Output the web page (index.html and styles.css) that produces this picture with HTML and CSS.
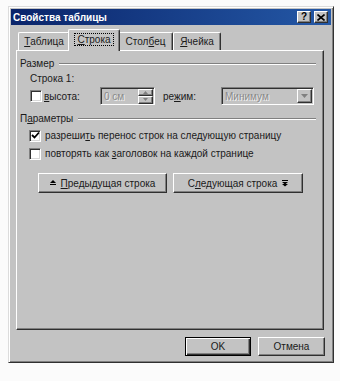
FILE: index.html
```html
<!DOCTYPE html>
<html lang="ru">
<head>
    <meta charset="UTF-8">
    <title>Свойства таблицы</title>
    <link rel="stylesheet" href="styles.css">
</head>
<body>

<div class="window">
    <div class="titlebar">
        <span class="title">Свойства таблицы</span>
        <div class="title-btns">
            <span class="tbtn">?</span>
            <span class="tbtn close">
                <svg width="8" height="7" viewBox="0 0 8 7"><path d="M0.5 0.5 L7.5 6.5 M7.5 0.5 L0.5 6.5" stroke="#000" stroke-width="1.6"/></svg>
            </span>
        </div>
    </div>

    <div class="body">
        <!-- Tabs -->
        <div class="tabs">
            <div class="tab t1"><u>Т</u>аблица</div>
            <div class="tab t2 active"><span class="focus"><u>С</u>трока</span></div>
            <div class="tab t3">Стол<u>б</u>ец</div>
            <div class="tab t4"><u>Я</u>чейка</div>
        </div>

        <div class="panel">
            <!-- Size group -->
            <div class="group-head"><span>Размер</span><div class="etched"></div></div>
            <div class="row-label">Строка 1:</div>
            <div class="size-row">
                <span class="checkbox"></span>
                <span class="lbl-height"><u>в</u>ысота:</span>
                <div class="field spin">
                    <span class="disabled">0 см</span>
                    <div class="spinner">
                        <span class="sbtn"><svg width="5" height="3" viewBox="0 0 5 3"><path d="M2.5 0 L5 3 L0 3 Z" fill="#808080"/></svg></span>
                        <span class="sbtn"><svg width="5" height="3" viewBox="0 0 5 3"><path d="M0 0 L5 0 L2.5 3 Z" fill="#808080"/></svg></span>
                    </div>
                </div>
                <span class="lbl-mode">ре<u>ж</u>им:</span>
                <div class="field combo">
                    <span class="disabled">Минимум</span>
                    <span class="drop"><svg width="7" height="4" viewBox="0 0 7 4"><path d="M0 0 L7 0 L3.5 4 Z" fill="#808080"/></svg></span>
                </div>
            </div>

            <!-- Options group -->
            <div class="group-head params"><span>П<u>а</u>раметры</span><div class="etched"></div></div>
            <div class="check-row first">
                <span class="checkbox">
                    <svg width="9" height="9" viewBox="0 0 9 9"><path d="M1 4 L3.5 6.5 L8 1.5" fill="none" stroke="#000" stroke-width="1.8"/></svg>
                </span>
                <span>разреши<u>т</u>ь перенос строк на следующую страницу</span>
            </div>
            <div class="check-row">
                <span class="checkbox"></span>
                <span>повторять как <u>з</u>аголовок на каждой странице</span>
            </div>

            <div class="nav-row">
                <button class="btn nav">
                    <svg width="6" height="6" viewBox="0 0 6 6"><path d="M3 0 L6 3 L0 3 Z" fill="#000"/><rect x="0" y="4" width="6" height="1" fill="#000"/></svg>
                    <span><u>П</u>редыдущая строка</span>
                </button>
                <button class="btn nav">
                    <span>С<u>л</u>едующая строка</span>
                    <svg width="6" height="7" viewBox="0 0 6 7"><rect x="0" y="0" width="6" height="1" fill="#000"/><path d="M0 2 L6 2 L3 4.5 Z M0 4 L6 4 L3 6.5 Z" fill="#000"/></svg>
                </button>
            </div>
        </div>

        <div class="footer">
            <button class="btn default">OK</button>
            <button class="btn cancel">Отмена</button>
        </div>
    </div>
</div>

</body>
</html>
```

FILE: styles.css
```css
/* Classic dialog look */
body {
    margin: 0;
    background-color: #fbfbfb;
    font-family: "Liberation Sans", Arial, sans-serif;
    font-size: 10px;
    color: #1a1a1a;
}

u {
    text-decoration: underline;
    text-underline-offset: 1px;
}

.window {
    margin: 6px 0 0 8px;
    width: 326px;
    height: 357px;
    box-sizing: border-box;
    padding: 2px;
    background-color: #c3c3c3;
    border: 1px solid;
    border-color: #dcdcdc #303030 #303030 #dcdcdc;
    box-shadow: inset 1px 1px #fff, inset -1px -1px #808080;
}

/* Title bar */
.titlebar {
    height: 16px;
    display: flex;
    align-items: center;
    justify-content: space-between;
    padding: 0 3px 0 2px;
    background: linear-gradient(to right, #0a246a, #2458a6);
}

.title {
    color: #fff;
    font-weight: bold;
    font-size: 10px;
}

.title-btns {
    display: flex;
    gap: 3px;
}

.tbtn {
    width: 12px;
    height: 10px;
    display: flex;
    align-items: center;
    justify-content: center;
    background-color: #c3c3c3;
    font-weight: bold;
    font-size: 10px;
    line-height: 10px;
    color: #000;
    border: 1px solid;
    border-color: #fff #303030 #303030 #fff;
    box-shadow: inset -1px -1px #808080;
    box-sizing: content-box;
}

/* Body */
.body {
    padding: 4px 7px 0 5px;
}

/* Tabs */
.tabs {
    display: flex;
    align-items: flex-end;
    height: 21px;
    padding-left: 2px;
}

.tab {
    height: 18px;
    box-sizing: border-box;
    display: flex;
    align-items: center;
    justify-content: center;
    border: 1px solid;
    border-bottom: none;
    border-color: #fff #303030 #303030 #fff;
    border-radius: 2px 2px 0 0;
    box-shadow: inset -1px 0 #808080;
}

.t1 { width: 52px; }
.t2 { width: 52px; }
.t3 { width: 55px; }
.t4 { width: 48px; }

.tab.active {
    height: 22px;
    margin: 0 -2px -1px;
    position: relative;
    z-index: 1;
    background-color: #c3c3c3;
    padding-bottom: 2px;
}

.focus {
    outline: 1px dotted #000;
    outline-offset: 0;
    padding: 0 2px;
}

/* Tab panel */
.panel {
    width: 308px;
    height: 280px;
    box-sizing: border-box;
    border: 1px solid;
    border-color: #fff #303030 #303030 #fff;
    box-shadow: inset -1px -1px #808080;
    padding: 6px 7px 0 3px;
}

.group-head {
    display: flex;
    align-items: center;
    height: 13px;
}

.group-head.params {
    margin-top: 7px;
}

.etched {
    flex: 1;
    margin-left: 5px;
    border-top: 1px solid #808080;
    border-bottom: 1px solid #fff;
}

.row-label {
    height: 13px;
    line-height: 13px;
    margin-top: 2px;
    padding-left: 10px;
}

.size-row {
    display: flex;
    align-items: center;
    height: 18px;
    margin-top: 2px;
    padding-left: 10px;
}

.checkbox {
    width: 12px;
    height: 12px;
    box-sizing: border-box;
    display: flex;
    align-items: center;
    justify-content: center;
    background-color: #fff;
    border: 1px solid;
    border-color: #808080 #fff #fff #808080;
    box-shadow: inset 1px 1px #303030, inset -1px -1px #d8d8d8;
    flex-shrink: 0;
}

.lbl-height {
    width: 56px;
    margin-left: 2px;
}

.lbl-mode {
    width: 58px;
    margin-left: 8px;
}

.field {
    height: 18px;
    box-sizing: border-box;
    display: flex;
    align-items: center;
    justify-content: space-between;
    border: 1px solid;
    border-color: #808080 #fff #fff #808080;
    box-shadow: inset 1px 1px #303030;
    padding: 1px 1px 1px 3px;
    background-color: #c3c3c3;
}

.spin {
    width: 55px;
}

.combo {
    width: 93px;
}

.disabled {
    color: #8a8a8a;
    text-shadow: 1px 1px #f2f2f2;
}

.spinner {
    display: flex;
    flex-direction: column;
    width: 15px;
    height: 15px;
}

.sbtn, .drop {
    flex: 1;
    display: flex;
    align-items: center;
    justify-content: center;
    border: 1px solid;
    border-color: #fff #303030 #303030 #fff;
    box-shadow: inset -1px -1px #808080;
}

.drop {
    flex: none;
    width: 13px;
    height: 12px;
}

/* Check rows */
.check-row {
    display: flex;
    align-items: center;
    height: 13px;
    margin-top: 5px;
    padding-left: 9px;
}

.check-row.first {
    margin-top: 4px;
}

.check-row .checkbox {
    margin-right: 4px;
}

/* Buttons */
.btn {
    font-family: inherit;
    font-size: 10px;
    color: #1a1a1a;
    height: 20px;
    padding: 0;
    background-color: #c3c3c3;
    border: 1px solid;
    border-color: #fff #303030 #303030 #fff;
    box-shadow: inset -1px -1px #808080;
    display: flex;
    align-items: center;
    justify-content: center;
    gap: 5px;
}

.nav-row {
    display: flex;
    gap: 6px;
    margin-top: 13px;
    padding-left: 18px;
}

.nav:first-child { width: 129px; }
.nav:last-child { width: 130px; }

.footer {
    display: flex;
    justify-content: flex-end;
    gap: 7px;
    margin-top: 7px;
    margin-right: -1px;
}

.footer .btn {
    height: 19px;
}

.default {
    width: 66px;
    border: 1px solid #000;
    box-shadow: inset 1px 1px #fff, inset -1px -1px #303030, inset -2px -2px #808080;
}

.cancel {
    width: 67px;
}
```
